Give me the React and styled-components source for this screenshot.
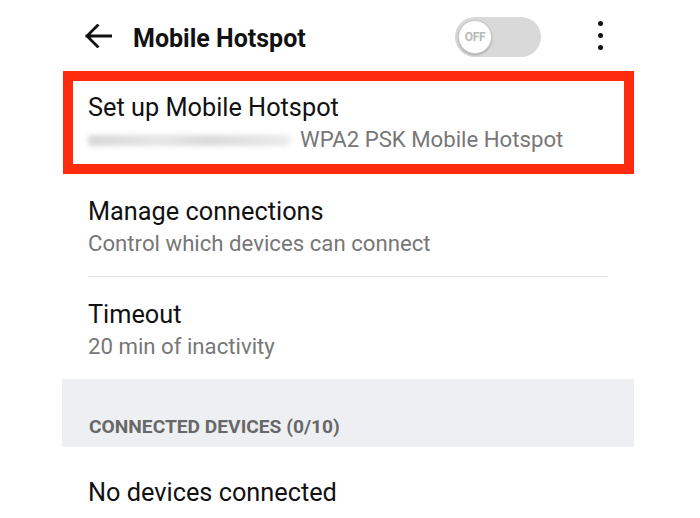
import React from "react";
import styled, { createGlobalStyle } from "styled-components";

const GlobalStyle = createGlobalStyle`
  html, body {
    margin: 0;
    padding: 0;
    background: #fff;
  }
  body {
    font-family: Roboto, "Noto Sans", "Liberation Sans", sans-serif;
    color: #111;
  }
`;

const Screen = styled.div`
  width: 572px;
  margin-left: 62px;
`;

const Header = styled.header`
  display: flex;
  align-items: center;
  height: 71px;
  padding-left: 22px;
  padding-right: 24px;
  box-sizing: border-box;
`;

const BackButton = styled.div`
  display: flex;
  width: 28px;
  height: 24px;
  margin-right: 21px;
`;

const Title = styled.h1`
  margin: 0;
  padding-top: 6px;
  font-size: 25px;
  line-height: 30px;
  font-weight: 700;
  color: #111;
`;

const Track = styled.div`
  display: flex;
  align-items: center;
  width: 86px;
  height: 40px;
  margin-left: auto;
  margin-top: 3px;
  padding: 0 3px;
  box-sizing: border-box;
  border-radius: 20px;
  background: #d9d9d9;
`;

const Knob = styled.div`
  display: flex;
  align-items: center;
  justify-content: center;
  width: 34px;
  height: 34px;
  box-sizing: border-box;
  border-radius: 50%;
  background: #fff;
  border: 1px solid #c9c9c9;
  box-shadow: 0 1px 2px rgba(0, 0, 0, 0.25);
  font-size: 12px;
  font-weight: 700;
  color: #b8b8b8;
  letter-spacing: -0.3px;
`;

const Kebab = styled.div`
  display: flex;
  flex-direction: column;
  align-items: center;
  gap: 7px;
  width: 20px;
  margin-left: 49px;
`;

const Dot = styled.span`
  width: 5px;
  height: 5px;
  border-radius: 50%;
  background: #111;
`;

const Highlight = styled.section`
  margin-left: 1px;
  height: 103px;
  box-sizing: border-box;
  border: 10px solid #fe2b0e;
  padding: 12px 0 0 15px;
`;

const Row = styled.div`
  margin: 0 26px;
  padding: 23px 0 18px;
  border-bottom: ${(p) => (p.$divider ? "1px solid #e6e6e6" : "none")};
`;

const ItemTitle = styled.div`
  font-size: 25.3px;
  line-height: 30px;
  color: #111;
`;

const ItemSub = styled.div`
  margin-top: 1px;
  font-size: 22.2px;
  line-height: 30px;
  color: #777;
  white-space: nowrap;
`;

const Redacted = styled.span`
  display: inline-block;
  width: 202px;
  height: 11px;
  margin-right: 10px;
  vertical-align: 1px;
  border-radius: 4px;
  background: linear-gradient(90deg, #d6d6d6, #e6e6e6 35%, #dadada 60%, #ebebeb);
  filter: blur(2.5px);
`;

const SectionBand = styled.div`
  display: flex;
  align-items: flex-end;
  height: 68px;
  box-sizing: border-box;
  padding: 0 0 9px 27px;
  background: #eeeff2;
  font-size: 19.2px;
  line-height: 22px;
  font-weight: 700;
  color: #686868;
`;

const EmptyRow = styled.div`
  margin: 0 26px;
  padding-top: 31px;
  font-size: 25.3px;
  line-height: 30px;
  color: #111;
`;

const BackArrow = () => (
  <svg width="28" height="24" viewBox="0 0 28 24" fill="none">
    <path
      d="M27 12H3M13.5 1.5L3 12l10.5 10.5"
      stroke="#111"
      strokeWidth="2.8"
      strokeLinecap="square"
    />
  </svg>
);

export default function App() {
  return (
    <>
      <GlobalStyle />
      <Screen>
        <Header>
          <BackButton>
            <BackArrow />
          </BackButton>
          <Title>Mobile Hotspot</Title>
          <Track>
            <Knob>OFF</Knob>
          </Track>
          <Kebab>
            <Dot />
            <Dot />
            <Dot />
          </Kebab>
        </Header>

        <Highlight>
          <ItemTitle>Set up Mobile Hotspot</ItemTitle>
          <ItemSub>
            <Redacted />
            WPA2 PSK Mobile Hotspot
          </ItemSub>
        </Highlight>

        <Row $divider>
          <ItemTitle>Manage connections</ItemTitle>
          <ItemSub>Control which devices can connect</ItemSub>
        </Row>

        <Row>
          <ItemTitle>Timeout</ItemTitle>
          <ItemSub>20 min of inactivity</ItemSub>
        </Row>

        <SectionBand>CONNECTED DEVICES (0/10)</SectionBand>

        <EmptyRow>No devices connected</EmptyRow>
      </Screen>
    </>
  );
}
